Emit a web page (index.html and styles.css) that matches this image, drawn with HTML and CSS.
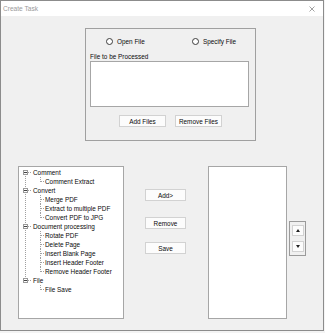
FILE: index.html
```html
<!DOCTYPE html>
<html lang="en">
<head>
    <meta charset="UTF-8">
    <meta name="viewport" content="width=device-width, initial-scale=1.0">
    <title>Create Task</title>
    <link rel="stylesheet" href="styles.css">
</head>
<body>
<div class="window">
    <div class="titlebar">
        <span class="title">Create Task</span>
        <svg class="close" width="6" height="6" viewBox="0 0 6 6">
            <path d="M0.5 0.5 L5.5 5.5 M5.5 0.5 L0.5 5.5" stroke="#8a8a8a" stroke-width="0.8" fill="none"/>
        </svg>
    </div>

    <div class="content">
        <div class="group">
            <div class="radios">
                <label class="radio"><span class="dot"></span>Open File</label>
                <label class="radio radio-specify"><span class="dot"></span>Specify File</label>
            </div>
            <div class="caption">File to be Processed</div>
            <div class="listbox files"></div>
            <div class="group-buttons">
                <button class="btn btn-files">Add Files</button>
                <button class="btn btn-files">Remove Files</button>
            </div>
        </div>

        <div class="lower">
            <ul class="tree">
                <li class="root">
                    <div class="node-row"><span class="exp"></span><span class="hline"></span><span class="label">Comment</span></div>
                    <ul class="children">
                        <li class="child">Comment Extract</li>
                    </ul>
                </li>
                <li class="root">
                    <div class="node-row"><span class="exp"></span><span class="hline"></span><span class="label">Convert</span></div>
                    <ul class="children">
                        <li class="child">Merge PDF</li>
                        <li class="child">Extract to multiple PDF</li>
                        <li class="child">Convert PDF to JPG</li>
                    </ul>
                </li>
                <li class="root">
                    <div class="node-row"><span class="exp"></span><span class="hline"></span><span class="label">Document processing</span></div>
                    <ul class="children">
                        <li class="child">Rotate PDF</li>
                        <li class="child">Delete Page</li>
                        <li class="child">Insert Blank Page</li>
                        <li class="child">Insert Header Footer</li>
                        <li class="child">Remove Header Footer</li>
                    </ul>
                </li>
                <li class="root">
                    <div class="node-row"><span class="exp"></span><span class="hline"></span><span class="label">File</span></div>
                    <ul class="children">
                        <li class="child">File Save</li>
                    </ul>
                </li>
            </ul>

            <div class="actions">
                <button class="btn btn-action">Add&gt;</button>
                <button class="btn btn-action btn-remove">Remove</button>
                <button class="btn btn-action btn-save">Save</button>
            </div>

            <div class="listbox queue"></div>

            <div class="updown">
                <button class="btn btn-arrow">
                    <svg width="4" height="3" viewBox="0 0 4 3"><polygon points="2,0 4,3 0,3" fill="#222"/></svg>
                </button>
                <button class="btn btn-arrow">
                    <svg width="4" height="3" viewBox="0 0 4 3"><polygon points="0,0 4,0 2,3" fill="#222"/></svg>
                </button>
            </div>
        </div>
    </div>
</div>
</body>
</html>
```

FILE: styles.css
```css
body {
    margin: 0;
    padding: 0;
    background-color: #f4f4f4;
    font-family: "Liberation Sans", Arial, sans-serif;
    font-size: 6.4px;
    color: #0a0a0a;
}

.window {
    width: 324px;
    height: 331px;
    box-sizing: border-box;
    border: 1px solid #8c8c8c;
    background-color: #f0f0f0;
}

.titlebar {
    height: 15px;
    background-color: #fff;
    display: flex;
    justify-content: space-between;
    align-items: center;
    padding: 0 8px 0 2px;
}

.title {
    font-size: 6.6px;
    color: #9a9a9a;
}

.group {
    margin: 12px 0 0 84px;
    width: 171px;
    height: 113px;
    box-sizing: border-box;
    border: 1px solid #a0a0a0;
}

.radios {
    display: flex;
    padding: 8px 0 0 20px;
    height: 8px;
}

.radio {
    display: flex;
    align-items: center;
    flex-shrink: 0;
    width: 86px;
}

.radio-specify {
    width: auto;
}

.dot {
    width: 7px;
    height: 7px;
    box-sizing: border-box;
    border: 1px solid #3c3c3c;
    border-radius: 50%;
    background-color: #fff;
    margin-right: 4px;
}

.caption {
    margin: 8px 0 0 4px;
    height: 8px;
    line-height: 8px;
}

.listbox {
    background-color: #fff;
    border: 1px solid #a6a6a6;
    box-sizing: border-box;
}

.files {
    margin-left: 4px;
    width: 159px;
    height: 46px;
}

.group-buttons {
    display: flex;
    margin: 8px 0 0 33px;
    gap: 9px;
}

.btn {
    padding: 0;
    margin: 0;
    font-family: inherit;
    font-size: inherit;
    color: #0a0a0a;
    background-color: #fcfcfc;
    border: 1px solid #d2d2d2;
    box-sizing: border-box;
    display: flex;
    align-items: center;
    justify-content: center;
}

.btn-files {
    width: 47px;
    height: 12px;
}

.lower {
    display: flex;
    align-items: flex-start;
    margin-top: 25px;
}

/* tree view */
.tree {
    list-style: none;
    margin: 0 0 0 17px;
    padding: 1px 0 0 0;
    width: 106px;
    height: 153px;
    box-sizing: border-box;
    border: 1px solid #a6a6a6;
    background-color: #fff;
}

.root {
    position: relative;
}

.root::before {
    content: "";
    position: absolute;
    left: 6px;
    top: 4px;
    bottom: -5px;
    border-left: 1px dotted #a0a0a0;
}

.root:last-child::before {
    display: none;
}

.node-row {
    display: flex;
    align-items: center;
    height: 9px;
    white-space: nowrap;
}

.exp {
    width: 5px;
    height: 5px;
    box-sizing: border-box;
    margin-left: 4px;
    border: 1px solid #9a9a9a;
    background-color: #fff;
    display: flex;
    align-items: center;
    justify-content: center;
    position: relative;
    z-index: 1;
}

.exp::after {
    content: "";
    width: 3px;
    height: 1px;
    background-color: #444;
}

.hline {
    width: 3px;
    border-top: 1px dotted #a0a0a0;
}

.label {
    margin-left: 2px;
}

.children {
    list-style: none;
    margin: 0;
    padding: 0;
}

.child {
    position: relative;
    height: 9px;
    line-height: 9px;
    padding-left: 26px;
    white-space: nowrap;
}

.child::before {
    content: "";
    position: absolute;
    left: 21px;
    top: 0;
    bottom: 0;
    border-left: 1px dotted #a0a0a0;
}

.child:last-child::before {
    bottom: 4px;
}

.child::after {
    content: "";
    position: absolute;
    left: 22px;
    top: 4px;
    width: 3px;
    border-top: 1px dotted #a0a0a0;
}

/* middle buttons */
.actions {
    display: flex;
    flex-direction: column;
    margin-left: 21px;
    padding-top: 23px;
}

.btn-action {
    width: 41px;
    height: 12px;
}

.btn-remove {
    margin-top: 16px;
}

.btn-save {
    margin-top: 13px;
}

.queue {
    margin-left: 22px;
    width: 79px;
    height: 153px;
}

.updown {
    margin: 55px 0 0 2px;
    width: 17px;
    height: 35px;
    box-sizing: border-box;
    border: 1px solid #9a9a9a;
    padding: 3px 0 0 2px;
}

.btn-arrow {
    width: 12px;
    height: 11px;
}

.btn-arrow + .btn-arrow {
    margin-top: 5px;
}
```
